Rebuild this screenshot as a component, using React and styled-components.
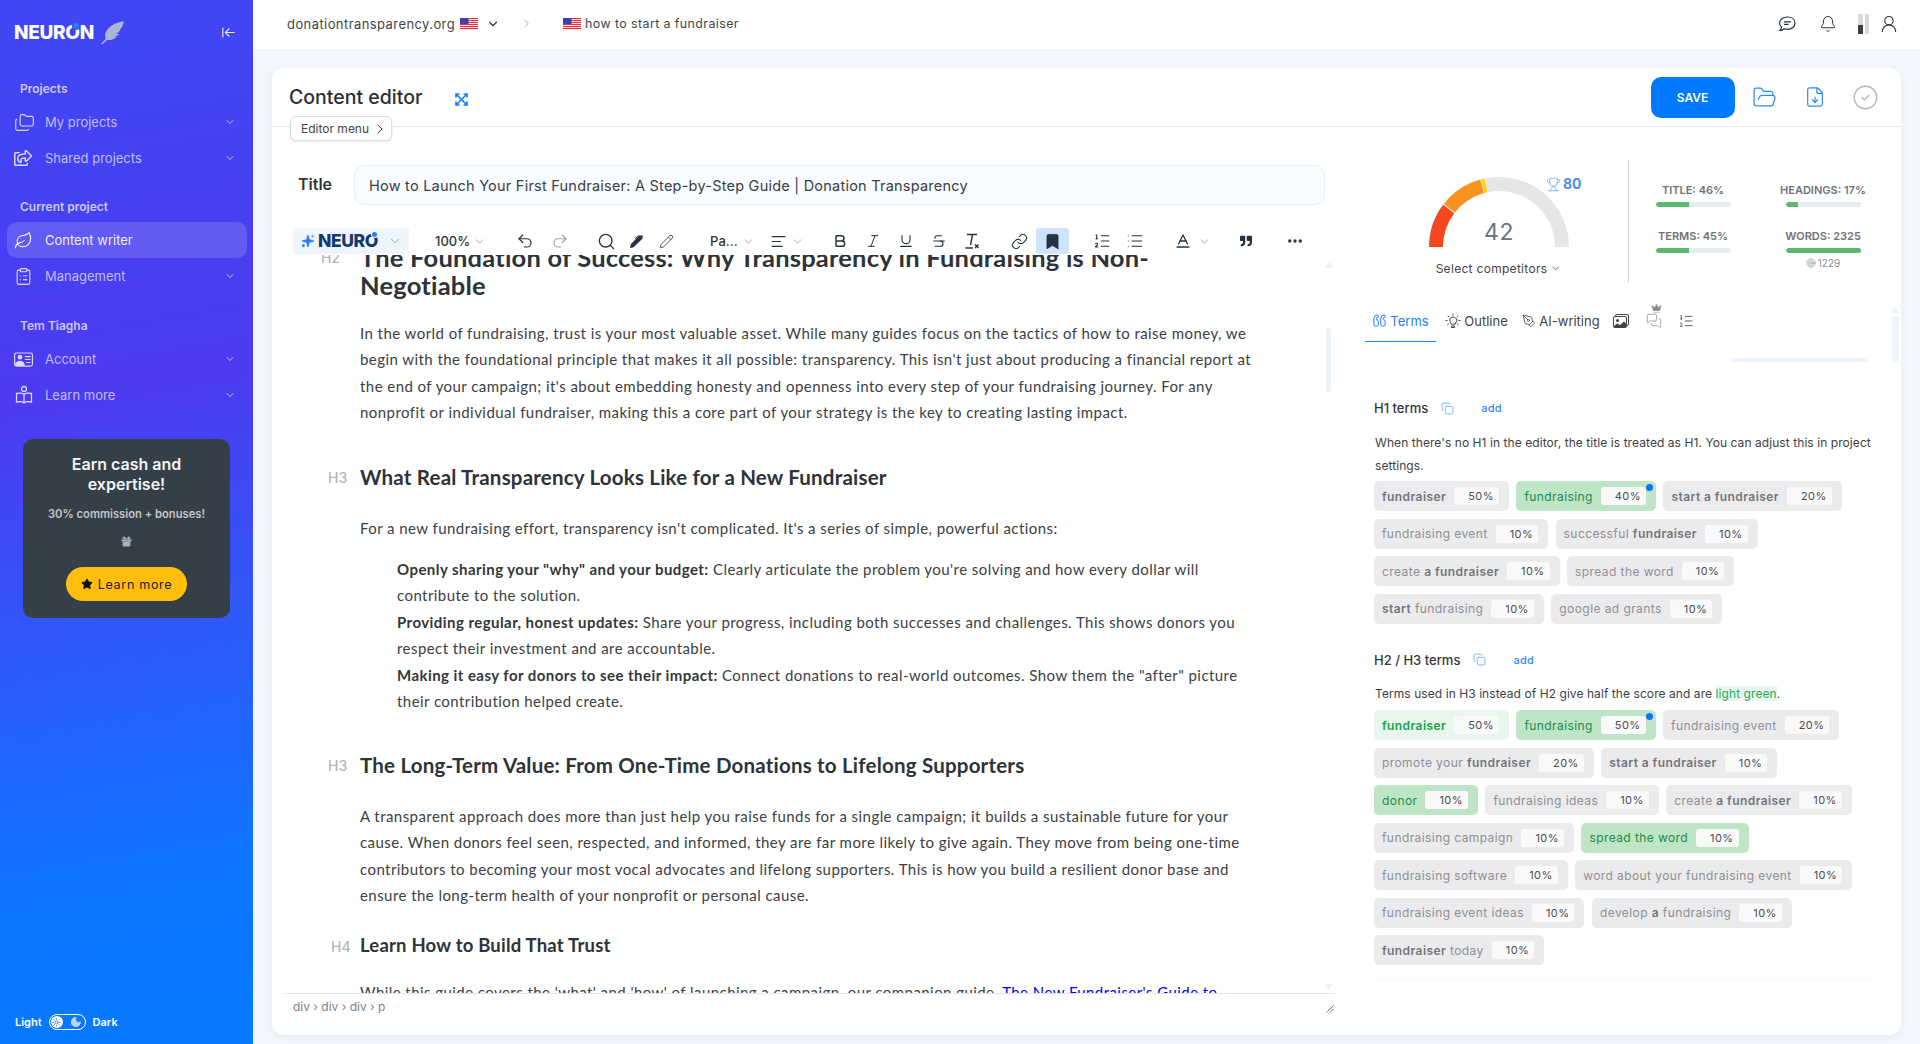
import React from 'react';
import styled, { createGlobalStyle, css } from 'styled-components';
import {
  ArrowLeftToLine, AlignLeft, Baseline, Bell, Bold, Bookmark, ChevronDown, ChevronRight, CircleCheck,
  ClipboardList, Copy, Crown, Ellipsis, FileDown, FolderOpen, Folders, Italic, Leaf,
  Link as LinkIcon, List, ListOrdered, MessagesSquare, Moon, Pencil, PenTool, Quote, Redo2, Search,
  Sparkles, Star, Strikethrough, Sun, Target, Trophy, Underline, Undo2, UserRound, Gift
} from 'lucide-react';
import { FaRegShareSquare, FaQuoteRight } from 'react-icons/fa';
import { BsPersonVcard, BsFillPenFill, BsImages } from 'react-icons/bs';

const Global = createGlobalStyle`
  html, body { margin: 0; padding: 0; height: 100%; overflow: hidden; background: #f3f6fc; }
  body { font-family: Inter, "Liberation Sans", sans-serif; color: #333; }
  * { box-sizing: border-box; }
`;

const Page = styled.div`
  display: grid;
  grid-template-columns: 253px 1fr;
  width: 1920px;
  height: 1044px;
  overflow: hidden;
`;

/* ---------- Sidebar ---------- */
const Side = styled.aside`
  display: flex;
  flex-direction: column;
  height: 100%;
  background: linear-gradient(170deg, #3f47f5 0%, #4c3bf0 38%, #2f58fa 60%, #0f74ff 82%, #057aff 100%);
`;
const SideHead = styled.div`
  display: flex;
  align-items: center;
  justify-content: space-between;
  height: 60px;
  padding: 4px 17px 0 14px;
  color: #fff;
`;
const Brand = styled.div`
  display: flex;
  align-items: center;
  gap: 6px;
`;
const BrandText = styled.span`
  font-family: Inter, sans-serif;
  font-weight: 800;
  font-size: ${p => p.$size}px;
  letter-spacing: ${p => p.$ls}px;
  color: ${p => p.$color || '#fff'};
  line-height: 1;
`;
const BrandO = styled.span`
  position: relative;
  display: inline-block;
  &::after {
    content: '';
    position: absolute;
    top: ${p => p.$top}px;
    right: 1px;
    width: ${p => p.$dot}px;
    height: ${p => p.$dot}px;
    border-radius: 50%;
    background: #2f7bf0;
    box-shadow: 0 0 0 1px ${p => p.$ring};
  }
`;
const SectionLabel = styled.div`
  height: 18px;
  line-height: 18px;
  padding-left: 20px;
  margin: ${p => p.$mt}px 0 6px;
  font-size: 12px;
  font-weight: 600;
  color: rgba(255, 255, 255, 0.72);
`;
const NavItem = styled.div`
  display: flex;
  align-items: center;
  height: 36px;
  margin: 0 6px 0 7px;
  padding: 0 11px 0 7px;
  border-radius: 10px;
  font-size: 13px;
  color: ${p => (p.$active ? 'rgba(255,255,255,.92)' : 'rgba(255,255,255,.66)')};
  background: ${p => (p.$active ? 'rgba(255,255,255,.15)' : 'transparent')};
`;
const NavIcon = styled.span`
  display: flex;
  width: 31px;
  color: rgba(255, 255, 255, 0.8);
`;
const NavText = styled.span`
  flex: 1;
`;
const Promo = styled.div`
  margin: 26px 0 0 23px;
  width: 207px;
  height: 179px;
  padding-top: 15px;
  display: flex;
  flex-direction: column;
  align-items: center;
  background: #343f47;
  border-radius: 10px;
  color: #fff;
  text-align: center;
`;
const PromoTitle = styled.div`
  font-size: 16px;
  font-weight: 600;
  line-height: 20px;
  color: #f2f4f5;
`;
const PromoSub = styled.div`
  margin-top: 13px;
  font-size: 11.2px;
  font-weight: 600;
  line-height: 14px;
  color: #c3c8cb;
`;
const PromoGift = styled.div`
  margin-top: 11px;
  height: 14px;
  color: #aeb4b8;
`;
const PromoBtn = styled.div`
  margin-top: 21px;
  width: 121px;
  height: 34px;
  display: flex;
  align-items: center;
  justify-content: center;
  gap: 5px;
  border-radius: 17px;
  background: #ffbe0b;
  color: #1c1c1c;
  font-size: 12.5px;
  letter-spacing: 0.7px;
`;
const ThemeRow = styled.div`
  margin-top: auto;
  display: flex;
  align-items: center;
  gap: 7px;
  padding: 0 0 14px 15px;
  color: #fff;
  font-size: 11px;
  font-weight: 600;
`;
const Toggle = styled.div`
  display: flex;
  align-items: center;
  justify-content: space-between;
  width: 37px;
  height: 16px;
  padding: 1px 3px 1px 1px;
  border: 1px solid #fff;
  border-radius: 8px;
`;
const Knob = styled.span`
  display: flex;
  align-items: center;
  justify-content: center;
  width: 12px;
  height: 12px;
  border-radius: 50%;
  background: #fff;
  color: #1d6ff5;
`;

/* ---------- Main ---------- */
const Main = styled.main`
  display: flex;
  flex-direction: column;
  height: 1044px;
  min-width: 0;
`;
const Topbar = styled.header`
  display: flex;
  align-items: center;
  height: 49px;
  padding: 0 21px 2px 34px;
  background: #fff;
  color: #444;
  font-size: 13px;
  letter-spacing: 0.42px;
`;
const Crumb = styled.span`
  display: flex;
  align-items: center;
  margin-left: ${p => p.$ml || 0}px;
  gap: ${p => p.$gap || 0}px;
  font-size: ${p => p.$fs || 'inherit'};
`;
const TopIcons = styled.div`
  margin-left: auto;
  display: flex;
  align-items: center;
  color: #26323f;
`;
const TopSlot = styled.span`
  display: flex;
  margin-left: ${p => p.$ml || 0}px;
`;
const Meter = styled.span`
  display: flex;
  gap: 2px;
  height: 20px;
  margin-left: 21px;
`;
const MeterBar = styled.span`
  width: 4.5px;
  height: 20px;
  background: ${p => (p.$fill ? 'linear-gradient(#d9d9d9 55%, #3d3d3d 55%)' : '#d9d9d9')};
`;
const Content = styled.div`
  flex: 1;
  min-height: 0;
  padding: 19px 19px 9px 19px;
`;
const Card = styled.section`
  height: 100%;
  display: flex;
  flex-direction: column;
  background: #fff;
  border-radius: 12px;
  box-shadow: 0 2px 8px rgba(40, 60, 100, 0.06);
`;
const CardHead = styled.div`
  position: relative;
  display: flex;
  align-items: center;
  height: 59px;
  flex: none;
  padding: 0 10.5px 0 17px;
  border-bottom: 1px solid #e6e7e9;
`;
const CardTitle = styled.h1`
  margin: 0;
  font-size: 19.5px;
  font-weight: 500;
  color: #2b2f33;
`;
const Expand = styled.span`
  display: flex;
  margin: 4px 0 0 33px;
  color: #1180ff;
`;
const EditorMenu = styled.div`
  position: absolute;
  left: 18px;
  top: 48px;
  z-index: 2;
  display: flex;
  align-items: center;
  gap: 3px;
  width: 102px;
  height: 25px;
  padding-left: 10px;
  background: #fff;
  border: 1px solid #ddd;
  border-radius: 6px;
  box-shadow: 0 1px 3px rgba(0, 0, 0, 0.1);
  font-size: 12px;
  color: #444;
`;
const Actions = styled.div`
  margin-left: auto;
  display: flex;
  align-items: center;
`;
const SaveBtn = styled.div`
  display: flex;
  align-items: center;
  justify-content: center;
  width: 84px;
  height: 41px;
  margin-right: 4.5px;
  border-radius: 10px;
  background: #007bff;
  color: #fff;
  font-size: 12px;
  font-weight: 600;
`;
const ActionSlot = styled.span`
  display: flex;
  justify-content: center;
  width: 50.5px;
  color: ${p => p.$color};
`;
const CardBody = styled.div`
  flex: 1;
  min-height: 0;
  display: grid;
  grid-template-columns: 1063px 1fr;
  column-gap: 25px;
`;

/* ---------- Editor ---------- */
const EditorCol = styled.div`
  display: flex;
  flex-direction: column;
  min-height: 0;
  padding-left: 13px;
`;
const TitleRow = styled.div`
  display: flex;
  align-items: center;
  margin: 38px 10px 0 13px;
  height: 40px;
  flex: none;
`;
const TitleLabel = styled.label`
  width: 56px;
  font-size: 16px;
  font-weight: 600;
  color: #333;
  padding-bottom: 3px;
`;
const TitleInput = styled.div`
  flex: 1;
  height: 40px;
  display: flex;
  align-items: center;
  padding-left: 14px;
  background: #f8fbff;
  border: 1px solid #e6eef8;
  border-radius: 10px;
  font-size: 14.5px;
  letter-spacing: 0.23px;
  color: #3a3f44;
`;
const Toolbar = styled.div`
  display: flex;
  align-items: center;
  height: 26px;
  flex: none;
  margin: 23px 0 1px 8px;
  color: #26323f;
`;
const NeuroBtn = styled.div`
  display: flex;
  align-items: center;
  width: 116px;
  height: 26px;
  padding-left: 8px;
  background: #eef5fd;
  border-radius: 3px;
  color: #123a6b;
`;
const Group = styled.div`
  display: flex;
  align-items: center;
  margin-left: ${p => p.$ml}px;
`;
const Tool = styled.span`
  display: flex;
  align-items: center;
  justify-content: center;
  width: ${p => p.$w || 33}px;
  height: 26px;
  border-radius: 3px;
  color: ${p => (p.$muted ? '#9aa3ad' : 'inherit')};
  background: ${p => (p.$active ? '#cfe3fb' : 'transparent')};
`;
const ToolText = styled.span`
  font-size: 13px;
  font-weight: 500;
  color: #333;
`;
const EditorScroll = styled.div`
  position: relative;
  flex: 1;
  min-height: 0;
  overflow: hidden;
`;
const Doc = styled.article`
  margin-top: -12px;
  padding-left: 75px;
  width: 977px;
  font-family: Lato, "Noto Sans", sans-serif;
  font-size: 15px;
  line-height: 26.5px;
  letter-spacing: 0.44px;
  color: #3c4043;
`;
const HeadingRow = styled.div`
  display: flex;
  margin: ${p => p.$mt || 0}px 0 0 -${p => p.$lw}px;
`;
const HLabel = styled.span`
  flex: none;
  width: ${p => p.$lw}px;
  padding-top: 2px;
  font-family: Inter, sans-serif;
  font-size: 14px;
  font-weight: 500;
  letter-spacing: 0;
  color: #b3b6b9;
`;
const Heading = styled.div`
  font-weight: 700;
  color: #2d3338;
  ${p => p.$level === 2 && css`font-size: 25.5px; line-height: 28px; letter-spacing: 0.2px;`}
  ${p => p.$level === 3 && css`font-size: 20.5px; line-height: 28px; letter-spacing: 0.2px;`}
  ${p => p.$level === 4 && css`font-size: 18.5px; line-height: 26px; letter-spacing: 0.2px;`}
`;
const Para = styled.p`
  margin: ${p => p.$mt}px 0 0;
`;
const Indent = styled.div`
  margin: 14.5px 0 0 37px;
  b { font-weight: 700; color: #33373a; }
`;
const DocLink = styled.span`
  color: #0000ee;
`;
const Track = styled.div`
  position: absolute;
  z-index: 2;
  right: ${p => p.$right}px;
  top: ${p => p.$top}px;
  width: ${p => p.$w || 5}px;
  height: ${p => p.$h}px;
  background: #eef4fc;
  border-radius: 3px;
`;
const Arrow = styled.div`
  position: absolute;
  z-index: 2;
  right: ${p => p.$right}px;
  top: ${p => p.$top}px;
  width: 0;
  height: 0;
  border-left: 4px solid transparent;
  border-right: 4px solid transparent;
  ${p => (p.$down ? 'border-top: 6px solid #e8f0fb;' : 'border-bottom: 6px solid #e8f0fb;')}
`;
const Status = styled.div`
  position: relative;
  flex: none;
  height: 42px;
  padding: 6px 0 0 8px;
  border-top: 1px solid #e4e5e7;
  font-size: 12px;
  line-height: 14px;
  color: #7d8288;
`;
const Grip = styled.span`
  position: absolute;
  right: 1px;
  top: 11px;
  display: flex;
  color: #777;
`;

/* ---------- Right panel ---------- */
const Panel = styled.aside`
  position: relative;
  min-height: 0;
  overflow: hidden;
`;
const ScoreRow = styled.div`
  display: flex;
  height: 122px;
  margin-top: 33px;
`;
const GaugeBox = styled.div`
  position: relative;
  width: 269px;
  flex: none;
  display: flex;
  flex-direction: column;
  align-items: center;
  padding: 17px 0 0 9px;
  border-right: 1px solid #cfcfcf;
`;
const GaugeScore = styled.div`
  position: absolute;
  left: 139px;
  top: 57px;
  transform: translateX(-50%);
  font-size: 23px;
  line-height: 30px;
  color: #6b7280;
  letter-spacing: 0.6px;
`;
const Goal = styled.div`
  position: absolute;
  left: 186px;
  top: 16px;
  display: flex;
  align-items: center;
  gap: 2px;
  color: #4a90e2;
  font-size: 14px;
  font-weight: 700;
  line-height: 16px;
`;
const Competitors = styled.div`
  display: flex;
  align-items: center;
  gap: 3px;
  margin-top: 14px;
  font-size: 12px;
  letter-spacing: 0.3px;
  color: #444;
`;
const Stats = styled.div`
  flex: 1;
  display: grid;
  grid-template-columns: 130px 130px;
  grid-auto-rows: 46px;
  justify-content: start;
  margin-left: -1px;
  padding-top: 24px;
`;
const Stat = styled.div`
  display: flex;
  flex-direction: column;
  align-items: center;
`;
const StatLabel = styled.div`
  font-size: 11px;
  font-weight: 600;
  line-height: 13px;
  color: #6f7377;
  white-space: nowrap;
`;
const Bar = styled.div`
  width: 75px;
  height: 5px;
  margin-top: 5px;
  border-radius: 3px;
  background: #e9ecef;
  overflow: hidden;
`;
const BarFill = styled.div`
  height: 100%;
  background: #5cb870;
  border-radius: 3px 0 0 3px;
`;
const TargetRow = styled.div`
  display: flex;
  align-items: center;
  gap: 2px;
  margin-top: 4px;
  font-size: 10px;
  line-height: 12px;
  color: #8a8f94;
`;
const Tabs = styled.nav`
  display: flex;
  align-items: center;
  height: 34px;
  margin: 26px 0 0 5px;
  font-size: 13px;
  color: #444;
`;
const TabItem = styled.div`
  position: relative;
  display: flex;
  align-items: center;
  justify-content: center;
  gap: 3px;
  width: ${p => p.$w}px;
  height: 34px;
  padding-bottom: 8px;
  color: ${p => (p.$active ? '#1a82f7' : 'inherit')};
  border-bottom: 1px solid ${p => (p.$active ? '#1a82f7' : 'transparent')};
`;
const FlipIcon = styled.span`
  display: flex;
  transform: rotate(180deg);
`;
const CrownMark = styled.span`
  position: absolute;
  left: 14px;
  top: -5px;
  display: flex;
  color: #8b8b8b;
`;
const Stub = styled.div`
  width: 136px;
  height: 4px;
  margin: 16px 0 0 371px;
  background: #eef4fc;
  border-radius: 6px 6px 0 0;
`;
const Terms = styled.div`
  padding: 0 0 0 14px;
`;
const TermsHead = styled.div`
  display: flex;
  align-items: center;
  height: 20px;
  margin-top: ${p => p.$mt}px;
  font-size: 13px;
  font-weight: 500;
  color: #33373b;
`;
const CopyIcon = styled.span`
  display: flex;
  margin-left: ${p => p.$ml}px;
  color: #4a9bf5;
`;
const AddLink = styled.span`
  margin-left: ${p => p.$ml}px;
  font-size: 11px;
  letter-spacing: 0.3px;
  color: #2d88f7;
`;
const TermsNote = styled.p`
  margin: ${p => p.$mt}px 0 0 1px;
  width: 504px;
  font-size: 12px;
  line-height: 23px;
  letter-spacing: 0.07px;
  color: #3d4145;
`;
const Highlight = styled.span`
  background: #e8f7ee;
  color: #2aa85a;
`;
const ChipWrap = styled.div`
  display: flex;
  flex-wrap: wrap;
  gap: 7.5px 7.5px;
  width: 486px;
  margin-top: ${p => p.$mt || 0}px;
`;
const Chip = styled.div`
  position: relative;
  display: flex;
  align-items: center;
  height: 30px;
  padding: 0 10px 0 8px;
  gap: 8px;
  border-radius: 5px;
  font-size: 12px;
  letter-spacing: 0.42px;
  white-space: nowrap;
  color: ${p => (p.$tone === 'green' ? '#1d8a4b' : p.$tone === 'light' ? '#16a34a' : '#8d9094')};
  background: ${p => (p.$tone === 'green' ? '#bfe5c7' : p.$tone === 'light' ? '#e8f6ed' : '#ebebed')};
  b {
    font-weight: 600;
    color: ${p => (p.$tone === 'light' ? '#16a34a' : '#73767a')};
  }
`;
const Pct = styled.span`
  display: block;
  height: 18px;
  padding: 0 5px 0 14px;
  min-width: 42px;
  border-radius: 3px;
  background: #f9f9fa;
  font-size: 11px;
  line-height: 18px;
  text-align: right;
  color: #4a4d50;
`;
const Dot = styled.span`
  position: absolute;
  right: 3px;
  top: 3px;
  width: 7px;
  height: 7px;
  border-radius: 50%;
  background: #0a76f5;
`;
const EndShadow = styled.div`
  width: 500px;
  height: 1px;
  margin-top: 12px;
  box-shadow: 0 1px 3px rgba(0, 0, 0, 0.08);
`;

/* ---------- Drawings ---------- */
const Flag = ({ w = 18, h = 12 }) => (
  <svg width={w} height={h} viewBox="0 0 18 12" aria-hidden="true">
    <rect width="18" height="12" fill="#f6f6f6" />
    {[0, 2, 4, 6, 8, 10].map(y => <rect key={y} y={y} width="18" height="1.1" fill="#ee2d3d" />)}
    <rect width="8.5" height="6" fill="#3f3fa8" />
  </svg>
);
const Feather = () => (
  <svg width="25" height="25" viewBox="0 0 22 22" aria-hidden="true">
    <path d="M21 1C14 2 8 5 5.500 10 4 13 4.500 15 5 16.500L1 21l1 .5 4-4c3 .5 6 0 9-3-1 0-2 0-3-.2 2 0 4-.8 5-2-1 0-2 0-3-.3 2-.5 3.500-2 4-4C19.800 6 20.500 3.500 21 1z" fill="#a9b6d6" />
  </svg>
);
const ExpandIcon = () => (
  <svg width="13" height="13" viewBox="0 0 13 13" fill="none" stroke="currentColor" strokeWidth="1.7" aria-hidden="true">
    <path d="M1 4.500V1h3.500M8.500 1H12v3.500M12 8.500V12H8.500M4.500 12H1V8.500M2 2l9 9M11 2l-9 9" />
  </svg>
);
const Book = () => (
  <svg width="20" height="20" viewBox="0 0 20 20" fill="none" stroke="currentColor" strokeWidth="1.3" aria-hidden="true">
    <circle cx="10" cy="4" r="2.500" />
    <path d="M10 9.500C8 8 5 8 2.500 8.500v8.500c2.500-.5 5.500-.5 7.500 1 2-1.500 5-1.500 7.500-1V8.500C15 8 12 8 10 9.500zM10 9.500V18" />
  </svg>
);
const Chat = () => (
  <svg width="18" height="18" viewBox="0 0 18 18" fill="none" stroke="currentColor" strokeWidth="1.2" aria-hidden="true">
    <path d="M9.500 2C5 2 1.500 4.500 1.500 8c0 1.700.8 3 2 4 0 1.500-.7 3-1.500 3.500 2 0 3.300-.8 4-1.700 1 .3 2.300.5 3.500.5 4.500 0 7.500-2.800 7.500-6.300S14 2 9.500 2z" />
    <path d="M6 6.800h7M6 9.300h4.500" />
  </svg>
);
const BulbRays = () => (
  <svg width="16" height="16" viewBox="0 0 16 16" fill="none" stroke="currentColor" strokeWidth="1" aria-hidden="true">
    <path d="M8 4c-2 0-3.300 1.500-3.300 3.200 0 1.300.8 2 1.300 2.800.2.400.3.800.3 1.200h4c0-.4.1-.8.3-1.200.5-.8 1.300-1.500 1.300-2.800C11.900 5.500 10 4 8 4z" />
    <path d="M6.500 13h3v1.500h-3zM8 .5V2.500M2.700 2.700l1.400 1.400M13.300 2.700l-1.400 1.400M.5 7.500h2M13.500 7.500h2M2.300 12l1.500-1.300M13.700 12l-1.500-1.300" />
  </svg>
);
const ClearFormat = () => (
  <svg width="18" height="18" viewBox="0 0 18 18" fill="none" stroke="currentColor" strokeWidth="1.4" aria-hidden="true">
    <path d="M4 2.500h10M9.500 2.500 7.500 13M2.500 16h7.500M12 12.500l3.500 3.500M15.500 12.500 12 16" />
  </svg>
);
const GaugeArcs = () => {
  const cx = 70, cy = 70, r = 63;
  const pt = a => [cx - r * Math.cos(a * Math.PI / 180), cy - r * Math.sin(a * Math.PI / 180)];
  const arc = (a, b) => {
    const [x1, y1] = pt(a); const [x2, y2] = pt(b);
    return `M${x1} ${y1}A${r} ${r} 0 0 1 ${x2} ${y2}`;
  };
  return (
    <svg width="140" height="70" viewBox="0 0 140 70" fill="none" strokeWidth="14" aria-hidden="true">
      <path d={arc(78, 180)} stroke="#e6e6e6" />
      <path d={arc(0, 37)} stroke="#f2471f" />
      <path d={arc(38, 74.500)} stroke="#f7931e" />
      <path d={arc(75, 78)} stroke="#ffcf1a" />
    </svg>
  );
};

/* ---------- Data ---------- */
const NAV = [
  { label: 'Projects', mt: 20, items: [
    { t: 'My projects', i: <Folders size={21} strokeWidth={1.2} />, c: true },
    { t: 'Shared projects', i: <FaRegShareSquare size={18} />, c: true },
  ] },
  { label: 'Current project', mt: 22, items: [
    { t: 'Content writer', i: <Leaf size={19} strokeWidth={1.3} color="#fff" />, active: true },
    { t: 'Management', i: <ClipboardList size={19} strokeWidth={1.4} />, c: true },
  ] },
  { label: 'Tem Tiagha', mt: 23, items: [
    { t: 'Account', i: <BsPersonVcard size={19} />, c: true },
    { t: 'Learn more', i: <Book />, c: true },
  ] },
];

const H1_TERMS = [
  { s: [['fundraiser', 1]], p: '50%' },
  { s: [['fundraising']], p: '40%', tone: 'green', dot: 1 },
  { s: [['start a fundraiser', 1]], p: '20%' },
  { s: [['fundraising event']], p: '10%' },
  { s: [['successful '], ['fundraiser', 1]], p: '10%' },
  { s: [['create '], ['a fundraiser', 1]], p: '10%' },
  { s: [['spread the word']], p: '10%' },
  { s: [['start', 1], [' fundraising']], p: '10%' },
  { s: [['google ad grants']], p: '10%' },
];
const H2_TERMS = [
  { s: [['fundraiser', 1]], p: '50%', tone: 'light' },
  { s: [['fundraising']], p: '50%', tone: 'green', dot: 1 },
  { s: [['fundraising event']], p: '20%' },
  { s: [['promote your '], ['fundraiser', 1]], p: '20%' },
  { s: [['start a fundraiser', 1]], p: '10%' },
  { s: [['donor']], p: '10%', tone: 'green' },
  { s: [['fundraising ideas']], p: '10%' },
  { s: [['create '], ['a fundraiser', 1]], p: '10%' },
  { s: [['fundraising campaign']], p: '10%' },
  { s: [['spread the word']], p: '10%', tone: 'green' },
  { s: [['fundraising software']], p: '10%' },
  { s: [['word about your fundraising event']], p: '10%' },
  { s: [['fundraising event ideas']], p: '10%' },
  { s: [['develop '], ['a', 1], [' fundraising']], p: '10%' },
  { s: [['fundraiser', 1], [' today']], p: '10%' },
];
const STATS = [
  { l: 'TITLE: 46%', v: 45 },
  { l: 'HEADINGS: 17%', v: 16 },
  { l: 'TERMS: 45%', v: 45 },
  { l: 'WORDS: 2325', v: 100, target: '1229' },
];

const TermChips = ({ list, mt }) => (
  <ChipWrap $mt={mt}>
    {list.map((c, i) => (
      <Chip key={i} $tone={c.tone}>
        <span>{c.s.map(([t, b], j) => (b ? <b key={j}>{t}</b> : <React.Fragment key={j}>{t}</React.Fragment>))}</span>
        <Pct>{c.p}</Pct>
        {c.dot ? <Dot /> : null}
      </Chip>
    ))}
  </ChipWrap>
);

const Chev = ({ s = 13 }) => <ChevronDown size={s} strokeWidth={1.5} color="#8d949c" />;

export default function App() {
  return (
    <Page>
      <Global />
      <Side>
        <SideHead>
          <Brand>
            <BrandText $size={19} $ls={-0.3}>NEUR<BrandO $dot={6} $top={0} $ring="#3f47f5">O</BrandO>N</BrandText>
            <Feather />
          </Brand>
          <ArrowLeftToLine size={15} strokeWidth={1.8} color="#e8e8ff" />
        </SideHead>
        {NAV.map(sec => (
          <React.Fragment key={sec.label}>
            <SectionLabel $mt={sec.mt}>{sec.label}</SectionLabel>
            {sec.items.map(it => (
              <NavItem key={it.t} $active={it.active}>
                <NavIcon>{it.i}</NavIcon>
                <NavText>{it.t}</NavText>
                {it.c ? <ChevronDown size={12} strokeWidth={2} /> : null}
              </NavItem>
            ))}
          </React.Fragment>
        ))}
        <Promo>
          <PromoTitle>Earn cash and<br />expertise!</PromoTitle>
          <PromoSub>30% commission + bonuses!</PromoSub>
          <PromoGift><Gift size={13} fill="#aeb4b8" strokeWidth={1.2} color="#6f787e" /></PromoGift>
          <PromoBtn><Star size={12} fill="#111" color="#111" />Learn more</PromoBtn>
        </Promo>
        <ThemeRow>
          <span>Light</span>
          <Toggle>
            <Knob><Sun size={9} strokeWidth={2} /></Knob>
            <Moon size={12} fill="#bcd6ff" color="#bcd6ff" />
          </Toggle>
          <span>Dark</span>
        </ThemeRow>
      </Side>

      <Main>
        <Topbar>
          <Crumb $gap={5}>donationtransparency.org <Flag /></Crumb>
          <Crumb $ml={8}><ChevronDown size={14} strokeWidth={2} color="#333" /></Crumb>
          <Crumb $ml={20}><ChevronRight size={13} strokeWidth={1.3} color="#888" /></Crumb>
          <Crumb $ml={30} $gap={4} $fs="12.4px"><Flag />how to start a fundraiser</Crumb>
          <TopIcons>
            <TopSlot><Chat /></TopSlot>
            <TopSlot $ml={23}><Bell size={18} strokeWidth={1.3} /></TopSlot>
            <Meter><MeterBar $fill /><MeterBar /></Meter>
            <TopSlot $ml={10}><UserRound size={20} strokeWidth={1.3} /></TopSlot>
          </TopIcons>
        </Topbar>
        <Content>
          <Card>
            <CardHead>
              <CardTitle>Content editor</CardTitle>
              <Expand><ExpandIcon /></Expand>
              <EditorMenu>Editor menu <ChevronRight size={16} strokeWidth={1.5} /></EditorMenu>
              <Actions>
                <SaveBtn>SAVE</SaveBtn>
                <ActionSlot $color="#2d8cf5"><FolderOpen size={25} strokeWidth={1.2} /></ActionSlot>
                <ActionSlot $color="#2d8cf5"><FileDown size={22} strokeWidth={1.3} /></ActionSlot>
                <ActionSlot $color="#b4b6b8"><CircleCheck size={27} strokeWidth={1.2} /></ActionSlot>
              </Actions>
            </CardHead>
            <CardBody>
              <EditorCol>
                <TitleRow>
                  <TitleLabel>Title</TitleLabel>
                  <TitleInput>How to Launch Your First Fundraiser: A Step-by-Step Guide | Donation Transparency</TitleInput>
                </TitleRow>
                <Toolbar>
                  <NeuroBtn>
                    <Sparkles size={14} color="#2f7bf0" fill="#2f7bf0" strokeWidth={1} />
                    <Crumb $ml={3}><BrandText $size={17.5} $ls={-0.4} $color="#123a6b">NEUR<BrandO $dot={5} $top={0} $ring="#eef5fd">O</BrandO></BrandText></Crumb>
                    <Crumb $ml={10}><Chev s={14} /></Crumb>
                  </NeuroBtn>
                  <Group $ml={26}><ToolText>100%</ToolText><Tool $w={19}><Chev /></Tool></Group>
                  <Group $ml={18}><Tool $w={35}><Undo2 size={18} strokeWidth={1.6} /></Tool><Tool $w={35} $muted><Redo2 size={18} strokeWidth={1.6} /></Tool></Group>
                  <Group $ml={14}><Tool $w={30}><Search size={19} strokeWidth={1.7} /></Tool><Tool $w={30}><BsFillPenFill size={13} /></Tool><Tool $w={30}><Pencil size={15} strokeWidth={1.3} /></Tool></Group>
                  <Group $ml={29}><ToolText>Pa...</ToolText><Tool $w={22}><Chev /></Tool></Group>
                  <Group $ml={9}><Tool $w={20}><AlignLeft size={17} strokeWidth={1.7} /></Tool><Tool $w={17}><Chev /></Tool></Group>
                  <Group $ml={17.500}>
                    <Tool><Bold size={16} strokeWidth={2.200} /></Tool>
                    <Tool><Italic size={16} strokeWidth={1.5} /></Tool>
                    <Tool><Underline size={16} strokeWidth={1.7} /></Tool>
                    <Tool><Strikethrough size={16} strokeWidth={1.6} /></Tool>
                    <Tool><ClearFormat /></Tool>
                  </Group>
                  <Group $ml={15}>
                    <Tool><LinkIcon size={17} strokeWidth={1.5} /></Tool>
                    <Tool $active><Bookmark size={19} fill="#26323f" strokeWidth={1} /></Tool>
                  </Group>
                  <Group $ml={16}>
                    <Tool><ListOrdered size={18} strokeWidth={1.5} /></Tool>
                    <Tool><List size={18} strokeWidth={1.5} /></Tool>
                  </Group>
                  <Group $ml={19.500}><Tool $w={24}><Baseline size={18} strokeWidth={1.7} /></Tool><Tool $w={20}><Chev /></Tool></Group>
                  <Group $ml={15}><Tool><FaQuoteRight size={12} /></Tool></Group>
                  <Group $ml={16}><Tool><Ellipsis size={18} strokeWidth={2.500} /></Tool></Group>
                </Toolbar>
                <EditorScroll>
                  <Arrow $right={2} $top={7} />
                  <Track $right={4} $top={73} $h={65} />
                  <Arrow $right={2} $top={729} $down />
                  <Doc>
                    <HeadingRow $lw={39}>
                      <HLabel $lw={39}>H2</HLabel>
                      <Heading $level={2}>The Foundation of Success: Why Transparency in Fundraising is Non-<br />Negotiable</Heading>
                    </HeadingRow>
                    <Para $mt={20.75}>In the world of fundraising, trust is your most valuable asset. While many guides focus on the tactics of how to raise money, we begin with the foundational principle that makes it all possible: transparency. This isn't just about producing a financial report at the end of your campaign; it's about embedding honesty and openness into every step of your fundraising journey. For any nonprofit or individual fundraiser, making this a core part of your strategy is the key to creating lasting impact.</Para>
                    <HeadingRow $lw={32} $mt={37}>
                      <HLabel $lw={32}>H3</HLabel>
                      <Heading $level={3}>What Real Transparency Looks Like for a New Fundraiser</Heading>
                    </HeadingRow>
                    <Para $mt={23.25}>For a new fundraising effort, transparency isn't complicated. It's a series of simple, powerful actions:</Para>
                    <Indent>
                      <b>Openly sharing your "why" and your budget:</b> Clearly articulate the problem you're solving and how every dollar will contribute to the solution.<br />
                      <b>Providing regular, honest updates:</b> Share your progress, including both successes and challenges. This shows donors you respect their investment and are accountable.<br />
                      <b>Making it easy for donors to see their impact:</b> Connect donations to real-world outcomes. Show them the "after" picture their contribution helped create.
                    </Indent>
                    <HeadingRow $lw={32} $mt={36.25}>
                      <HLabel $lw={32}>H3</HLabel>
                      <Heading $level={3}>The Long-Term Value: From One-Time Donations to Lifelong Supporters</Heading>
                    </HeadingRow>
                    <Para $mt={23.25}>A transparent approach does more than just help you raise funds for a single campaign; it builds a sustainable future for your cause. When donors feel seen, respected, and informed, they are far more likely to give again. They move from being one-time contributors to becoming your most vocal advocates and lifelong supporters. This is how you build a resilient donor base and ensure the long-term health of your nonprofit or personal cause.</Para>
                    <HeadingRow $lw={29} $mt={23.75}>
                      <HLabel $lw={29}>H4</HLabel>
                      <Heading $level={4}>Learn How to Build That Trust</Heading>
                    </HeadingRow>
                    <Para $mt={17.75}>While this guide covers the 'what' and 'how' of launching a campaign, our companion guide, <DocLink>The New Fundraiser's Guide to Building Donor Trust</DocLink> explores this in depth.</Para>
                  </Doc>
                </EditorScroll>
                <Status>
                  div › div › div › p
                  <Grip>
                    <svg width="8" height="8" viewBox="0 0 8 8" fill="none" stroke="currentColor" aria-hidden="true"><path d="M7.500.5l-7 7M7.500 4l-3.500 3.500" /></svg>
                  </Grip>
                </Status>
              </EditorCol>

              <Panel>
                <Arrow $right={2} $top={180} />
                <Track $right={2} $top={189} $w={7} $h={46} />
                <ScoreRow>
                  <GaugeBox>
                    <GaugeArcs />
                    <GaugeScore>42</GaugeScore>
                    <Goal><Trophy size={15} strokeWidth={1.2} color="#6aa7ee" />80</Goal>
                    <Competitors>Select competitors <ChevronDown size={11} strokeWidth={1.6} /></Competitors>
                  </GaugeBox>
                  <Stats>
                    {STATS.map(s => (
                      <Stat key={s.l}>
                        <StatLabel>{s.l}</StatLabel>
                        <Bar><BarFill style={{ width: `${s.v}%` }} /></Bar>
                        {s.target ? <TargetRow><Target size={10} strokeWidth={1.5} />{s.target}</TargetRow> : null}
                      </Stat>
                    ))}
                  </Stats>
                </ScoreRow>
                <Tabs>
                  <TabItem $w={71} $active><FlipIcon><Quote size={15} strokeWidth={1.6} /></FlipIcon>Terms</TabItem>
                  <TabItem $w={81}><BulbRays />Outline</TabItem>
                  <TabItem $w={88}><PenTool size={14} strokeWidth={1.4} />AI-writing</TabItem>
                  <TabItem $w={32}><BsImages size={16} /></TabItem>
                  <TabItem $w={34}>
                    <MessagesSquare size={16} strokeWidth={1.1} color="#8b8b8b" />
                    <CrownMark><Crown size={11} fill="#8b8b8b" strokeWidth={1} /></CrownMark>
                  </TabItem>
                  <TabItem $w={30}><ListOrdered size={16} strokeWidth={1.3} /></TabItem>
                </Tabs>
                <Stub />
                <Terms>
                  <TermsHead $mt={36}>H1 terms<CopyIcon $ml={13}><Copy size={13} strokeWidth={1.3} /></CopyIcon><AddLink $ml={27}>add</AddLink></TermsHead>
                  <TermsNote $mt={13}>When there's no H1 in the editor, the title is treated as H1. You can adjust this in project settings.</TermsNote>
                  <TermChips list={H1_TERMS} mt={4} />
                  <TermsHead $mt={26}>H2 / H3 terms<CopyIcon $ml={13}><Copy size={13} strokeWidth={1.3} /></CopyIcon><AddLink $ml={27}>add</AddLink></TermsHead>
                  <TermsNote $mt={12.5}>Terms used in H3 instead of H2 give half the score and are <Highlight>light green</Highlight>.</TermsNote>
                  <TermChips list={H2_TERMS} mt={5} />
                  <EndShadow />
                </Terms>
              </Panel>
            </CardBody>
          </Card>
        </Content>
      </Main>
    </Page>
  );
}
